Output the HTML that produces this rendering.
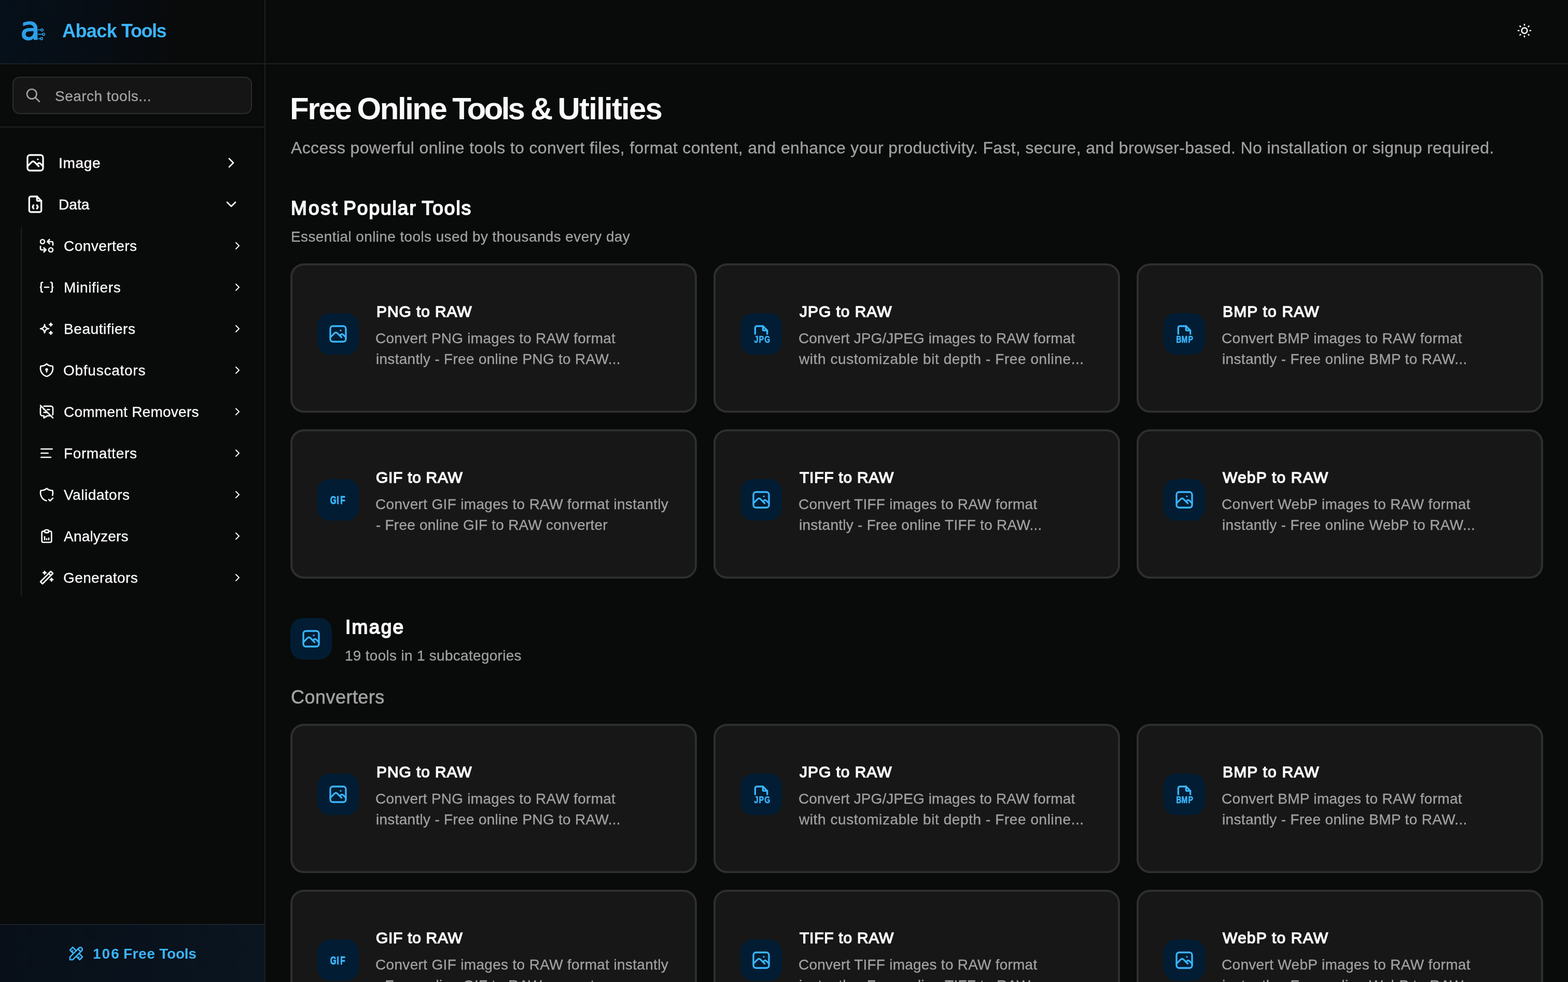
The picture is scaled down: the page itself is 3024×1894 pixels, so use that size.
<!DOCTYPE html>
<html lang="en">
<head>
<meta charset="utf-8">
<title>Aback Tools - Free Online Tools &amp; Utilities</title>
<meta name="viewport" content="width=3024">
<style>
*{box-sizing:border-box;margin:0;padding:0}
html,body{width:3024px;height:1894px;overflow:hidden;background:#090a0a}
@media (max-width:2000px){html{zoom:.5}}
body{font-family:"Liberation Sans",sans-serif;color:#fafafa;position:relative}
.t,.ic{will-change:transform}
a{color:inherit;text-decoration:none}
h1,h2,h3,p{font-weight:400}
.t{position:absolute;white-space:pre;display:block}
.ic{position:absolute;display:block;overflow:visible}
.sidebar{position:absolute;left:0;top:0;width:512px;height:1894px;border-right:2px solid #1e1f1f;background:#090a0a}
.brand{position:absolute;left:0;top:0;width:510px;height:124px;border-bottom:2px solid #1b1f24;background:linear-gradient(90deg,#06101a 0,#070d14 38%,#090a0a 68%)}
.search{position:absolute;left:24px;top:148px;width:462px;height:72px;border:2px solid #2c2c2c;border-radius:14px;background:#151515}
.search .ic,.search .t{margin:-2px 0 0 -2px}
.sep{position:absolute;left:0;width:510px;height:2px;background:#1e1f1f}
.subline{position:absolute;left:40px;top:438px;width:2px;height:712px;background:#1e1f1f}
.foot{position:absolute;left:0;top:1782px;width:510px;height:112px;border-top:2px solid #1b2029;background:linear-gradient(90deg,#080f18 0,#0a1520 100%)}
.foot .ic,.foot .t{margin-top:-2px}
.topbar{position:absolute;left:512px;top:0;width:2512px;height:124px;border-bottom:2px solid #1e1f1f}
main{position:absolute;left:512px;top:124px;width:2512px;height:1770px;overflow:hidden}
.card{position:absolute;width:784px;height:288px;border:4px solid #2e2e2e;border-radius:26px;background:#171717}
.ib{position:absolute;width:80px;height:80px;border-radius:24px;background:#021d33}
</style>
</head>
<body>
<aside class="sidebar">
<div class="brand">
<svg class="ic logo" style="left:36px;top:32px" width="60" height="56" viewBox="0 0 60 56" role="img" aria-label="Aback Tools logo"><text transform="translate(3.3 44.1) scale(1.01 1)" x="0" y="0" font-family='"DejaVu Sans", "Liberation Sans", sans-serif' font-size="61" fill="#2c9fe6" stroke="#2c9fe6" stroke-width="1.9" stroke-linejoin="round">a</text><g fill="none" stroke="#2c9fe6" stroke-width="1.7"><path d="M37 25.7h5.8M37 34.2h8.8M37 42.6h4.8"/><circle cx="45.1" cy="25.7" r="2.2"/><circle cx="48.1" cy="34.2" r="2.2"/><circle cx="44.1" cy="42.6" r="2.2"/></g></svg>
<span class="t brandname" aria-label="Aback Tools" style="left:119.80px;top:36px;font-size:36px;line-height:47px;color:#3bb5ff;letter-spacing:0;font-weight:700"><span style="letter-spacing:-0.600px">Aback</span> <span style="letter-spacing:-1.475px;margin-left:-1.000px">Tools</span></span>
</div>
<div class="search">
<svg class="ic" style="left:24px;top:20px" width="32" height="32" viewBox="0 0 24 24" fill="none" stroke="#a1a1a1" stroke-width="2" stroke-linecap="round" stroke-linejoin="round"><path d="M3 10a7 7 0 1 0 14 0a7 7 0 1 0 -14 0"/><path d="M21 21l-6 -6"/></svg>
<span class="t" style="left:82.30px;top:20px;font-size:28px;line-height:36px;color:#a3a3a3;letter-spacing:0.472px;-webkit-text-stroke:0.3px #a3a3a3">Search tools...</span>
</div>
<div class="sep" style="top:244px"></div>
<nav>
<a class="nav1">
<svg class="ic" style="left:48px;top:294px" width="40" height="40" viewBox="0 0 24 24" fill="none" stroke="#fafafa" stroke-width="2" stroke-linecap="round" stroke-linejoin="round"><path d="M15 8h.01"/><path d="M3 6a3 3 0 0 1 3 -3h12a3 3 0 0 1 3 3v12a3 3 0 0 1 -3 3h-12a3 3 0 0 1 -3 -3v-12z"/><path d="M3 16l5 -5c.928 -.893 2.072 -.893 3 0l5 5"/><path d="M14 14l1 -1c.928 -.893 2.072 -.893 3 0l3 3"/></svg>
<span class="t" style="left:112.53px;top:297px;font-size:28px;line-height:36px;color:#fafafa;letter-spacing:0.716px;-webkit-text-stroke:0.5px #fafafa">Image</span>
<svg class="ic" style="left:430px;top:298px" width="32" height="32" viewBox="0 0 24 24" fill="none" stroke="#fafafa" stroke-width="2" stroke-linecap="round" stroke-linejoin="round"><path d="M9 6l6 6l-6 6"/></svg>
</a>
<a class="nav1">
<svg class="ic" style="left:48px;top:374px" width="40" height="40" viewBox="0 0 24 24" fill="none" stroke="#fafafa" stroke-width="2" stroke-linecap="round" stroke-linejoin="round"><path d="M14 3v4a1 1 0 0 0 1 1h4"/><path d="M17 21h-10a2 2 0 0 1 -2 -2v-14a2 2 0 0 1 2 -2h7l5 5v11a2 2 0 0 1 -2 2z"/><path d="M10 13l-1 2l1 2"/><path d="M14 13l1 2l-1 2"/></svg>
<span class="t" style="left:113.00px;top:377px;font-size:28px;line-height:36px;color:#fafafa;letter-spacing:0.085px;-webkit-text-stroke:0.5px #fafafa">Data</span>
<svg class="ic" style="left:430px;top:378px" width="32" height="32" viewBox="0 0 24 24" fill="none" stroke="#fafafa" stroke-width="2" stroke-linecap="round" stroke-linejoin="round"><path d="M6 9l6 6l6 -6"/></svg>
</a>
<div class="subline"></div>
<a class="nav2">
<svg class="ic" style="left:74px;top:458px" width="32" height="32" viewBox="0 0 24 24" fill="none" stroke="#fafafa" stroke-width="2" stroke-linecap="round" stroke-linejoin="round"><path d="M3 6a3 3 0 1 0 6 0a3 3 0 0 0 -6 0"/><path d="M21 11v-3a2 2 0 0 0 -2 -2h-6l3 3m0 -6l-3 3"/><path d="M3 13v3a2 2 0 0 0 2 2h6l-3 -3m0 6l3 -3"/><path d="M15 18a3 3 0 1 0 6 0a3 3 0 0 0 -6 0"/></svg>
<span class="t" style="left:122.91px;top:457px;font-size:28px;line-height:36px;color:#fafafa;letter-spacing:0.449px;-webkit-text-stroke:0.3px #fafafa">Converters</span>
<svg class="ic" style="left:446px;top:462px" width="24" height="24" viewBox="0 0 24 24" fill="none" stroke="#fafafa" stroke-width="2" stroke-linecap="round" stroke-linejoin="round"><path d="M9 6l6 6l-6 6"/></svg>
</a>
<a class="nav2">
<svg class="ic" style="left:74px;top:538px" width="32" height="32" viewBox="0 0 24 24" fill="none" stroke="#fafafa" stroke-width="2" stroke-linecap="round" stroke-linejoin="round"><path d="M9 12h6"/><path d="M6 19a2 2 0 0 1 -2 -2v-4l-1 -1l1 -1v-4a2 2 0 0 1 2 -2"/><path d="M18 19a2 2 0 0 0 2 -2v-4l1 -1l-1 -1v-4a2 2 0 0 0 -2 -2"/></svg>
<span class="t" style="left:122.88px;top:537px;font-size:28px;line-height:36px;color:#fafafa;letter-spacing:0.681px;-webkit-text-stroke:0.3px #fafafa">Minifiers</span>
<svg class="ic" style="left:446px;top:542px" width="24" height="24" viewBox="0 0 24 24" fill="none" stroke="#fafafa" stroke-width="2" stroke-linecap="round" stroke-linejoin="round"><path d="M9 6l6 6l-6 6"/></svg>
</a>
<a class="nav2">
<svg class="ic" style="left:74px;top:618px" width="32" height="32" viewBox="0 0 24 24" fill="none" stroke="#fafafa" stroke-width="2" stroke-linecap="round" stroke-linejoin="round"><path d="M16 18a2 2 0 0 1 2 2a2 2 0 0 1 2 -2a2 2 0 0 1 -2 -2a2 2 0 0 1 -2 2zm0 -12a2 2 0 0 1 2 2a2 2 0 0 1 2 -2a2 2 0 0 1 -2 -2a2 2 0 0 1 -2 2zm-7 12a6 6 0 0 1 6 -6a6 6 0 0 1 -6 -6a6 6 0 0 1 -6 6a6 6 0 0 1 6 6z"/></svg>
<span class="t" style="left:122.88px;top:617px;font-size:28px;line-height:36px;color:#fafafa;letter-spacing:0.565px;-webkit-text-stroke:0.3px #fafafa">Beautifiers</span>
<svg class="ic" style="left:446px;top:622px" width="24" height="24" viewBox="0 0 24 24" fill="none" stroke="#fafafa" stroke-width="2" stroke-linecap="round" stroke-linejoin="round"><path d="M9 6l6 6l-6 6"/></svg>
</a>
<a class="nav2">
<svg class="ic" style="left:74px;top:698px" width="32" height="32" viewBox="0 0 24 24" fill="none" stroke="#fafafa" stroke-width="2" stroke-linecap="round" stroke-linejoin="round"><path d="M12 3a12 12 0 0 0 8.5 3a12 12 0 0 1 -8.5 15a12 12 0 0 1 -8.5 -15a12 12 0 0 0 8.5 -3"/><path d="M11 11a1 1 0 1 0 2 0a1 1 0 1 0 -2 0"/><path d="M12 12l0 2.5"/></svg>
<span class="t" style="left:122.25px;top:697px;font-size:28px;line-height:36px;color:#fafafa;letter-spacing:0.745px;-webkit-text-stroke:0.3px #fafafa">Obfuscators</span>
<svg class="ic" style="left:446px;top:702px" width="24" height="24" viewBox="0 0 24 24" fill="none" stroke="#fafafa" stroke-width="2" stroke-linecap="round" stroke-linejoin="round"><path d="M9 6l6 6l-6 6"/></svg>
</a>
<a class="nav2">
<svg class="ic" style="left:74px;top:778px" width="32" height="32" viewBox="0 0 24 24" fill="none" stroke="#fafafa" stroke-width="2" stroke-linecap="round" stroke-linejoin="round"><path d="M8 9h1m4 0h3"/><path d="M8 13h5"/><path d="M8 4h10a3 3 0 0 1 3 3v8c0 .577 -.163 1.116 -.445 1.573m-2.555 1.427h-5l-5 3v-3h-2a3 3 0 0 1 -3 -3v-8c0 -1.085 .576 -2.036 1.439 -2.562"/><path d="M3 3l18 18"/></svg>
<span class="t" style="left:122.91px;top:777px;font-size:28px;line-height:36px;color:#fafafa;letter-spacing:0.249px;-webkit-text-stroke:0.3px #fafafa">Comment Removers</span>
<svg class="ic" style="left:446px;top:782px" width="24" height="24" viewBox="0 0 24 24" fill="none" stroke="#fafafa" stroke-width="2" stroke-linecap="round" stroke-linejoin="round"><path d="M9 6l6 6l-6 6"/></svg>
</a>
<a class="nav2">
<svg class="ic" style="left:74px;top:858px" width="32" height="32" viewBox="0 0 24 24" fill="none" stroke="#fafafa" stroke-width="2" stroke-linecap="round" stroke-linejoin="round"><path d="M4 6l16 0"/><path d="M4 12l10 0"/><path d="M4 18l14 0"/></svg>
<span class="t" style="left:122.88px;top:857px;font-size:28px;line-height:36px;color:#fafafa;letter-spacing:0.616px;-webkit-text-stroke:0.3px #fafafa">Formatters</span>
<svg class="ic" style="left:446px;top:862px" width="24" height="24" viewBox="0 0 24 24" fill="none" stroke="#fafafa" stroke-width="2" stroke-linecap="round" stroke-linejoin="round"><path d="M9 6l6 6l-6 6"/></svg>
</a>
<a class="nav2">
<svg class="ic" style="left:74px;top:938px" width="32" height="32" viewBox="0 0 24 24" fill="none" stroke="#fafafa" stroke-width="2" stroke-linecap="round" stroke-linejoin="round"><path d="M11.46 20.846a12 12 0 0 1 -7.96 -14.846a12 12 0 0 0 8.5 -3a12 12 0 0 0 8.5 3a12 12 0 0 1 -.09 7.06"/><path d="M15 19l2 2l4 -4"/></svg>
<span class="t" style="left:123.30px;top:937px;font-size:28px;line-height:36px;color:#fafafa;letter-spacing:0.505px;-webkit-text-stroke:0.3px #fafafa">Validators</span>
<svg class="ic" style="left:446px;top:942px" width="24" height="24" viewBox="0 0 24 24" fill="none" stroke="#fafafa" stroke-width="2" stroke-linecap="round" stroke-linejoin="round"><path d="M9 6l6 6l-6 6"/></svg>
</a>
<a class="nav2">
<svg class="ic" style="left:74px;top:1018px" width="32" height="32" viewBox="0 0 24 24" fill="none" stroke="#fafafa" stroke-width="2" stroke-linecap="round" stroke-linejoin="round"><path d="M9 5h-2a2 2 0 0 0 -2 2v12a2 2 0 0 0 2 2h10a2 2 0 0 0 2 -2v-12a2 2 0 0 0 -2 -2h-2"/><path d="M9 5a2 2 0 0 1 2 -2h2a2 2 0 0 1 2 2a2 2 0 0 1 -2 2h-2a2 2 0 0 1 -2 -2z"/><path d="M9 17v-4"/><path d="M12 17v-1"/><path d="M15 17v-2"/></svg>
<span class="t" style="left:123.01px;top:1017px;font-size:28px;line-height:36px;color:#fafafa;letter-spacing:0.204px;-webkit-text-stroke:0.3px #fafafa">Analyzers</span>
<svg class="ic" style="left:446px;top:1022px" width="24" height="24" viewBox="0 0 24 24" fill="none" stroke="#fafafa" stroke-width="2" stroke-linecap="round" stroke-linejoin="round"><path d="M9 6l6 6l-6 6"/></svg>
</a>
<a class="nav2">
<svg class="ic" style="left:74px;top:1098px" width="32" height="32" viewBox="0 0 24 24" fill="none" stroke="#fafafa" stroke-width="2" stroke-linecap="round" stroke-linejoin="round"><path d="M6 21l15 -15l-3 -3l-15 15l3 3"/><path d="M15 6l3 3"/><path d="M9 3a2 2 0 0 0 2 2a2 2 0 0 0 -2 2a2 2 0 0 0 -2 -2a2 2 0 0 0 2 -2"/><path d="M19 13a2 2 0 0 0 2 2a2 2 0 0 0 -2 2a2 2 0 0 0 -2 -2a2 2 0 0 0 2 -2"/></svg>
<span class="t" style="left:122.29px;top:1097px;font-size:28px;line-height:36px;color:#fafafa;letter-spacing:0.397px;-webkit-text-stroke:0.3px #fafafa">Generators</span>
<svg class="ic" style="left:446px;top:1102px" width="24" height="24" viewBox="0 0 24 24" fill="none" stroke="#fafafa" stroke-width="2" stroke-linecap="round" stroke-linejoin="round"><path d="M9 6l6 6l-6 6"/></svg>
</a>
</nav>
<div class="foot">
<svg class="ic" style="left:131px;top:41px" width="32" height="32" viewBox="0 0 24 24" fill="none" stroke="#3bb5ff" stroke-width="2" stroke-linecap="round" stroke-linejoin="round"><path d="M3 21h4l13 -13a1.5 1.5 0 0 0 -4 -4l-13 13v4"/><path d="M14.5 5.5l4 4"/><path d="M12 8l-5 -5l-4 4l5 5"/><path d="M7 8l-1.5 1.5"/><path d="M16 12l5 5l-4 4l-5 -5"/><path d="M16 17l-1.5 1.5"/></svg>
<span class="t" aria-label="106 Free Tools" style="left:179.37px;top:40px;font-size:28px;line-height:36px;color:#3bb5ff;letter-spacing:0;font-weight:700"><span style="letter-spacing:2.000px">106</span> <span style="letter-spacing:0.600px;margin-left:-1.600px">Free</span> <span style="letter-spacing:-0.225px;margin-left:0.000px">Tools</span></span>
</div>
</aside>
<header class="topbar">
<svg class="ic" style="left:2412px;top:43px" width="32" height="32" viewBox="0 0 24 24" fill="none" stroke="#fafafa" stroke-width="2" stroke-linecap="round" stroke-linejoin="round"><path d="M8 12a4 4 0 1 0 8 0a4 4 0 1 0 -8 0"/><path d="M3 12h1m8 -9v1m8 8h1m-9 8v1m-6.4 -15.4l.7 .7m12.1 -.7l-.7 .7m0 11.4l.7 .7m-12.1 -.7l-.7 .7"/></svg>
</header>
<main>
<h1 class="t" aria-label="Free Online Tools &amp; Utilities" style="left:47.00px;top:47px;font-size:60px;line-height:78px;color:#fafafa;letter-spacing:0;font-weight:700"><span style="letter-spacing:-2.267px">Free</span> <span style="letter-spacing:-2.460px;margin-left:-4.800px">Online</span> <span style="letter-spacing:-3.700px;margin-left:-4.900px">Tools</span> <span style="letter-spacing:-2.000px;margin-left:-3.000px">&amp;</span> <span style="letter-spacing:-1.800px;margin-left:-5.400px">Utilities</span></h1>
<p class="t" style="left:48.73px;top:140px;font-size:32px;line-height:42px;color:#a1a1a1;letter-spacing:0.351px;-webkit-text-stroke:0.3px #a1a1a1">Access powerful online tools to convert files, format content, and enhance your productivity. Fast, secure, and browser-based. No installation or signup required.</p>
<section>
<h2 class="t" aria-label="Most Popular Tools" style="left:49.17px;top:254px;font-size:37px;line-height:48px;color:#fafafa;letter-spacing:0;-webkit-text-stroke:1.8px #fafafa"><span style="letter-spacing:3.100px">Most</span> <span style="letter-spacing:2.000px;margin-left:-1.700px">Popular</span> <span style="letter-spacing:2.075px;margin-left:-0.400px">Tools</span></h2>
<p class="t" style="left:48.94px;top:315px;font-size:28px;line-height:36px;color:#a1a1a1;letter-spacing:0.383px;-webkit-text-stroke:0.3px #a1a1a1">Essential online tools used by thousands every day</p>
<div class="grid">
<article class="card" style="left:48px;top:384px">
<div class="ib" style="left:48px;top:92px">
<svg class="ic" style="left:20px;top:20px" width="40" height="40" viewBox="0 0 24 24" fill="none" stroke="#3bb5ff" stroke-width="2" stroke-linecap="round" stroke-linejoin="round"><path d="M15 8h.01"/><path d="M3 6a3 3 0 0 1 3 -3h12a3 3 0 0 1 3 3v12a3 3 0 0 1 -3 3h-12a3 3 0 0 1 -3 -3v-12z"/><path d="M3 16l5 -5c.928 -.893 2.072 -.893 3 0l5 5"/><path d="M14 14l1 -1c.928 -.893 2.072 -.893 3 0l3 3"/></svg>
</div>
<h3 class="t" style="left:161.79px;top:69px;font-size:30px;line-height:39px;color:#fafafa;letter-spacing:0.900px;-webkit-text-stroke:1.4px #fafafa">PNG to RAW</h3>
<p class="desc">
<span class="t" style="left:160.41px;top:123px;font-size:28px;line-height:36px;color:#a1a1a1;letter-spacing:0.257px;-webkit-text-stroke:0.3px #a1a1a1">Convert PNG images to RAW format</span>
<span class="t" style="left:160.52px;top:163px;font-size:28px;line-height:36px;color:#a1a1a1;letter-spacing:0.290px;-webkit-text-stroke:0.3px #a1a1a1">instantly - Free online PNG to RAW...</span>
</p>
</article>
<article class="card" style="left:864px;top:384px">
<div class="ib" style="left:48px;top:92px">
<svg class="ic" style="left:20px;top:20px" width="40" height="40" viewBox="0 0 24 24" fill="none" stroke="#3bb5ff" stroke-width="2" stroke-linecap="round" stroke-linejoin="round" role="img"><path d="M14 3v4a1 1 0 0 0 1 1h4"/><path d="M5 12v-7a2 2 0 0 1 2 -2h7l5 5v4"/><text transform="scale(0.74 1)" x="5.38 12.86 21.31" y="22.1" font-family='"Liberation Sans", sans-serif' font-weight="700" font-size="11.4" fill="#3bb5ff" stroke="#3bb5ff" stroke-width="0.4" stroke-linejoin="round">JPG</text></svg>
</div>
<h3 class="t" style="left:161.60px;top:69px;font-size:30px;line-height:39px;color:#fafafa;letter-spacing:0.952px;-webkit-text-stroke:1.4px #fafafa">JPG to RAW</h3>
<p class="desc">
<span class="t" style="left:160.41px;top:123px;font-size:28px;line-height:36px;color:#a1a1a1;letter-spacing:0.102px;-webkit-text-stroke:0.3px #a1a1a1">Convert JPG/JPEG images to RAW format</span>
<span class="t" style="left:161.48px;top:163px;font-size:28px;line-height:36px;color:#a1a1a1;letter-spacing:0.573px;-webkit-text-stroke:0.3px #a1a1a1">with customizable bit depth - Free online...</span>
</p>
</article>
<article class="card" style="left:1680px;top:384px">
<div class="ib" style="left:48px;top:92px">
<svg class="ic" style="left:20px;top:20px" width="40" height="40" viewBox="0 0 24 24" fill="none" stroke="#3bb5ff" stroke-width="2" stroke-linecap="round" stroke-linejoin="round" role="img"><path d="M14 3v4a1 1 0 0 0 1 1h4"/><path d="M5 12v-7a2 2 0 0 1 2 -2h7l5 5v4"/><text transform="scale(0.74 1)" x="3.40 11.78 22.32" y="22.1" font-family='"Liberation Sans", sans-serif' font-weight="700" font-size="11.4" fill="#3bb5ff" stroke="#3bb5ff" stroke-width="0.4" stroke-linejoin="round">BMP</text></svg>
</div>
<h3 class="t" style="left:161.79px;top:69px;font-size:30px;line-height:39px;color:#fafafa;letter-spacing:1.175px;-webkit-text-stroke:1.4px #fafafa">BMP to RAW</h3>
<p class="desc">
<span class="t" style="left:160.41px;top:123px;font-size:28px;line-height:36px;color:#a1a1a1;letter-spacing:0.299px;-webkit-text-stroke:0.3px #a1a1a1">Convert BMP images to RAW format</span>
<span class="t" style="left:160.52px;top:163px;font-size:28px;line-height:36px;color:#a1a1a1;letter-spacing:0.326px;-webkit-text-stroke:0.3px #a1a1a1">instantly - Free online BMP to RAW...</span>
</p>
</article>
<article class="card" style="left:48px;top:704px">
<div class="ib" style="left:48px;top:92px">
<svg class="ic" style="left:20px;top:20px" width="40" height="40" viewBox="0 0 24 24" role="img"><text transform="scale(0.7 1)" x="3.99 15.09 20.74" y="16.95" font-family='"Liberation Sans", sans-serif' font-weight="700" font-size="13.2" fill="#3bb5ff" stroke="#3bb5ff" stroke-width="0.6" stroke-linejoin="round">GIF</text></svg>
</div>
<h3 class="t" style="left:160.82px;top:69px;font-size:30px;line-height:39px;color:#fafafa;letter-spacing:0.702px;-webkit-text-stroke:1.4px #fafafa">GIF to RAW</h3>
<p class="desc">
<span class="t" style="left:160.41px;top:123px;font-size:28px;line-height:36px;color:#a1a1a1;letter-spacing:0.327px;-webkit-text-stroke:0.3px #a1a1a1">Convert GIF images to RAW format instantly</span>
<span class="t" style="left:160.96px;top:163px;font-size:28px;line-height:36px;color:#a1a1a1;letter-spacing:0.220px;-webkit-text-stroke:0.3px #a1a1a1">- Free online GIF to RAW converter</span>
</p>
</article>
<article class="card" style="left:864px;top:704px">
<div class="ib" style="left:48px;top:92px">
<svg class="ic" style="left:20px;top:20px" width="40" height="40" viewBox="0 0 24 24" fill="none" stroke="#3bb5ff" stroke-width="2" stroke-linecap="round" stroke-linejoin="round"><path d="M15 8h.01"/><path d="M3 6a3 3 0 0 1 3 -3h12a3 3 0 0 1 3 3v12a3 3 0 0 1 -3 3h-12a3 3 0 0 1 -3 -3v-12z"/><path d="M3 16l5 -5c.928 -.893 2.072 -.893 3 0l5 5"/><path d="M14 14l1 -1c.928 -.893 2.072 -.893 3 0l3 3"/></svg>
</div>
<h3 class="t" style="left:161.76px;top:69px;font-size:30px;line-height:39px;color:#fafafa;letter-spacing:0.735px;-webkit-text-stroke:1.4px #fafafa">TIFF to RAW</h3>
<p class="desc">
<span class="t" style="left:160.41px;top:123px;font-size:28px;line-height:36px;color:#a1a1a1;letter-spacing:0.232px;-webkit-text-stroke:0.3px #a1a1a1">Convert TIFF images to RAW format</span>
<span class="t" style="left:160.52px;top:163px;font-size:28px;line-height:36px;color:#a1a1a1;letter-spacing:0.253px;-webkit-text-stroke:0.3px #a1a1a1">instantly - Free online TIFF to RAW...</span>
</p>
</article>
<article class="card" style="left:1680px;top:704px">
<div class="ib" style="left:48px;top:92px">
<svg class="ic" style="left:20px;top:20px" width="40" height="40" viewBox="0 0 24 24" fill="none" stroke="#3bb5ff" stroke-width="2" stroke-linecap="round" stroke-linejoin="round"><path d="M15 8h.01"/><path d="M3 6a3 3 0 0 1 3 -3h12a3 3 0 0 1 3 3v12a3 3 0 0 1 -3 3h-12a3 3 0 0 1 -3 -3v-12z"/><path d="M3 16l5 -5c.928 -.893 2.072 -.893 3 0l5 5"/><path d="M14 14l1 -1c.928 -.893 2.072 -.893 3 0l3 3"/></svg>
</div>
<h3 class="t" style="left:161.60px;top:69px;font-size:30px;line-height:39px;color:#fafafa;letter-spacing:1.194px;-webkit-text-stroke:1.4px #fafafa">WebP to RAW</h3>
<p class="desc">
<span class="t" style="left:160.41px;top:123px;font-size:28px;line-height:36px;color:#a1a1a1;letter-spacing:0.314px;-webkit-text-stroke:0.3px #a1a1a1">Convert WebP images to RAW format</span>
<span class="t" style="left:160.52px;top:163px;font-size:28px;line-height:36px;color:#a1a1a1;letter-spacing:0.330px;-webkit-text-stroke:0.3px #a1a1a1">instantly - Free online WebP to RAW...</span>
</p>
</article>
</div>
</section>
<section class="cat">
<div class="ib" style="left:48px;top:1068px">
<svg class="ic" style="left:20px;top:20px" width="40" height="40" viewBox="0 0 24 24" fill="none" stroke="#3bb5ff" stroke-width="2" stroke-linecap="round" stroke-linejoin="round"><path d="M15 8h.01"/><path d="M3 6a3 3 0 0 1 3 -3h12a3 3 0 0 1 3 3v12a3 3 0 0 1 -3 3h-12a3 3 0 0 1 -3 -3v-12z"/><path d="M3 16l5 -5c.928 -.893 2.072 -.893 3 0l5 5"/><path d="M14 14l1 -1c.928 -.893 2.072 -.893 3 0l3 3"/></svg>
</div>
<h2 class="t" style="left:153.91px;top:1062px;font-size:37px;line-height:48px;color:#fafafa;letter-spacing:2.332px;-webkit-text-stroke:1.8px #fafafa">Image</h2>
<p class="t" style="left:153.07px;top:1123px;font-size:28px;line-height:36px;color:#a1a1a1;letter-spacing:0.288px;-webkit-text-stroke:0.3px #a1a1a1">19 tools in 1 subcategories</p>
<h3 class="t" style="left:48.84px;top:1197px;font-size:36px;line-height:47px;color:#a1a1a1;letter-spacing:0.474px;-webkit-text-stroke:0.6px #a1a1a1">Converters</h3>
<div class="grid">
<article class="card" style="left:48px;top:1272px">
<div class="ib" style="left:48px;top:92px">
<svg class="ic" style="left:20px;top:20px" width="40" height="40" viewBox="0 0 24 24" fill="none" stroke="#3bb5ff" stroke-width="2" stroke-linecap="round" stroke-linejoin="round"><path d="M15 8h.01"/><path d="M3 6a3 3 0 0 1 3 -3h12a3 3 0 0 1 3 3v12a3 3 0 0 1 -3 3h-12a3 3 0 0 1 -3 -3v-12z"/><path d="M3 16l5 -5c.928 -.893 2.072 -.893 3 0l5 5"/><path d="M14 14l1 -1c.928 -.893 2.072 -.893 3 0l3 3"/></svg>
</div>
<h3 class="t" style="left:161.79px;top:69px;font-size:30px;line-height:39px;color:#fafafa;letter-spacing:0.900px;-webkit-text-stroke:1.4px #fafafa">PNG to RAW</h3>
<p class="desc">
<span class="t" style="left:160.41px;top:123px;font-size:28px;line-height:36px;color:#a1a1a1;letter-spacing:0.257px;-webkit-text-stroke:0.3px #a1a1a1">Convert PNG images to RAW format</span>
<span class="t" style="left:160.52px;top:163px;font-size:28px;line-height:36px;color:#a1a1a1;letter-spacing:0.290px;-webkit-text-stroke:0.3px #a1a1a1">instantly - Free online PNG to RAW...</span>
</p>
</article>
<article class="card" style="left:864px;top:1272px">
<div class="ib" style="left:48px;top:92px">
<svg class="ic" style="left:20px;top:20px" width="40" height="40" viewBox="0 0 24 24" fill="none" stroke="#3bb5ff" stroke-width="2" stroke-linecap="round" stroke-linejoin="round" role="img"><path d="M14 3v4a1 1 0 0 0 1 1h4"/><path d="M5 12v-7a2 2 0 0 1 2 -2h7l5 5v4"/><text transform="scale(0.74 1)" x="5.38 12.86 21.31" y="22.1" font-family='"Liberation Sans", sans-serif' font-weight="700" font-size="11.4" fill="#3bb5ff" stroke="#3bb5ff" stroke-width="0.4" stroke-linejoin="round">JPG</text></svg>
</div>
<h3 class="t" style="left:161.60px;top:69px;font-size:30px;line-height:39px;color:#fafafa;letter-spacing:0.952px;-webkit-text-stroke:1.4px #fafafa">JPG to RAW</h3>
<p class="desc">
<span class="t" style="left:160.41px;top:123px;font-size:28px;line-height:36px;color:#a1a1a1;letter-spacing:0.102px;-webkit-text-stroke:0.3px #a1a1a1">Convert JPG/JPEG images to RAW format</span>
<span class="t" style="left:161.48px;top:163px;font-size:28px;line-height:36px;color:#a1a1a1;letter-spacing:0.573px;-webkit-text-stroke:0.3px #a1a1a1">with customizable bit depth - Free online...</span>
</p>
</article>
<article class="card" style="left:1680px;top:1272px">
<div class="ib" style="left:48px;top:92px">
<svg class="ic" style="left:20px;top:20px" width="40" height="40" viewBox="0 0 24 24" fill="none" stroke="#3bb5ff" stroke-width="2" stroke-linecap="round" stroke-linejoin="round" role="img"><path d="M14 3v4a1 1 0 0 0 1 1h4"/><path d="M5 12v-7a2 2 0 0 1 2 -2h7l5 5v4"/><text transform="scale(0.74 1)" x="3.40 11.78 22.32" y="22.1" font-family='"Liberation Sans", sans-serif' font-weight="700" font-size="11.4" fill="#3bb5ff" stroke="#3bb5ff" stroke-width="0.4" stroke-linejoin="round">BMP</text></svg>
</div>
<h3 class="t" style="left:161.79px;top:69px;font-size:30px;line-height:39px;color:#fafafa;letter-spacing:1.175px;-webkit-text-stroke:1.4px #fafafa">BMP to RAW</h3>
<p class="desc">
<span class="t" style="left:160.41px;top:123px;font-size:28px;line-height:36px;color:#a1a1a1;letter-spacing:0.299px;-webkit-text-stroke:0.3px #a1a1a1">Convert BMP images to RAW format</span>
<span class="t" style="left:160.52px;top:163px;font-size:28px;line-height:36px;color:#a1a1a1;letter-spacing:0.326px;-webkit-text-stroke:0.3px #a1a1a1">instantly - Free online BMP to RAW...</span>
</p>
</article>
<article class="card" style="left:48px;top:1592px">
<div class="ib" style="left:48px;top:92px">
<svg class="ic" style="left:20px;top:20px" width="40" height="40" viewBox="0 0 24 24" role="img"><text transform="scale(0.7 1)" x="3.99 15.09 20.74" y="16.95" font-family='"Liberation Sans", sans-serif' font-weight="700" font-size="13.2" fill="#3bb5ff" stroke="#3bb5ff" stroke-width="0.6" stroke-linejoin="round">GIF</text></svg>
</div>
<h3 class="t" style="left:160.82px;top:69px;font-size:30px;line-height:39px;color:#fafafa;letter-spacing:0.702px;-webkit-text-stroke:1.4px #fafafa">GIF to RAW</h3>
<p class="desc">
<span class="t" style="left:160.41px;top:123px;font-size:28px;line-height:36px;color:#a1a1a1;letter-spacing:0.327px;-webkit-text-stroke:0.3px #a1a1a1">Convert GIF images to RAW format instantly</span>
<span class="t" style="left:160.96px;top:163px;font-size:28px;line-height:36px;color:#a1a1a1;letter-spacing:0.220px;-webkit-text-stroke:0.3px #a1a1a1">- Free online GIF to RAW converter</span>
</p>
</article>
<article class="card" style="left:864px;top:1592px">
<div class="ib" style="left:48px;top:92px">
<svg class="ic" style="left:20px;top:20px" width="40" height="40" viewBox="0 0 24 24" fill="none" stroke="#3bb5ff" stroke-width="2" stroke-linecap="round" stroke-linejoin="round"><path d="M15 8h.01"/><path d="M3 6a3 3 0 0 1 3 -3h12a3 3 0 0 1 3 3v12a3 3 0 0 1 -3 3h-12a3 3 0 0 1 -3 -3v-12z"/><path d="M3 16l5 -5c.928 -.893 2.072 -.893 3 0l5 5"/><path d="M14 14l1 -1c.928 -.893 2.072 -.893 3 0l3 3"/></svg>
</div>
<h3 class="t" style="left:161.76px;top:69px;font-size:30px;line-height:39px;color:#fafafa;letter-spacing:0.735px;-webkit-text-stroke:1.4px #fafafa">TIFF to RAW</h3>
<p class="desc">
<span class="t" style="left:160.41px;top:123px;font-size:28px;line-height:36px;color:#a1a1a1;letter-spacing:0.232px;-webkit-text-stroke:0.3px #a1a1a1">Convert TIFF images to RAW format</span>
<span class="t" style="left:160.52px;top:163px;font-size:28px;line-height:36px;color:#a1a1a1;letter-spacing:0.253px;-webkit-text-stroke:0.3px #a1a1a1">instantly - Free online TIFF to RAW...</span>
</p>
</article>
<article class="card" style="left:1680px;top:1592px">
<div class="ib" style="left:48px;top:92px">
<svg class="ic" style="left:20px;top:20px" width="40" height="40" viewBox="0 0 24 24" fill="none" stroke="#3bb5ff" stroke-width="2" stroke-linecap="round" stroke-linejoin="round"><path d="M15 8h.01"/><path d="M3 6a3 3 0 0 1 3 -3h12a3 3 0 0 1 3 3v12a3 3 0 0 1 -3 3h-12a3 3 0 0 1 -3 -3v-12z"/><path d="M3 16l5 -5c.928 -.893 2.072 -.893 3 0l5 5"/><path d="M14 14l1 -1c.928 -.893 2.072 -.893 3 0l3 3"/></svg>
</div>
<h3 class="t" style="left:161.60px;top:69px;font-size:30px;line-height:39px;color:#fafafa;letter-spacing:1.194px;-webkit-text-stroke:1.4px #fafafa">WebP to RAW</h3>
<p class="desc">
<span class="t" style="left:160.41px;top:123px;font-size:28px;line-height:36px;color:#a1a1a1;letter-spacing:0.314px;-webkit-text-stroke:0.3px #a1a1a1">Convert WebP images to RAW format</span>
<span class="t" style="left:160.52px;top:163px;font-size:28px;line-height:36px;color:#a1a1a1;letter-spacing:0.330px;-webkit-text-stroke:0.3px #a1a1a1">instantly - Free online WebP to RAW...</span>
</p>
</article>
</div>
</section>
</main>
</body>
</html>
